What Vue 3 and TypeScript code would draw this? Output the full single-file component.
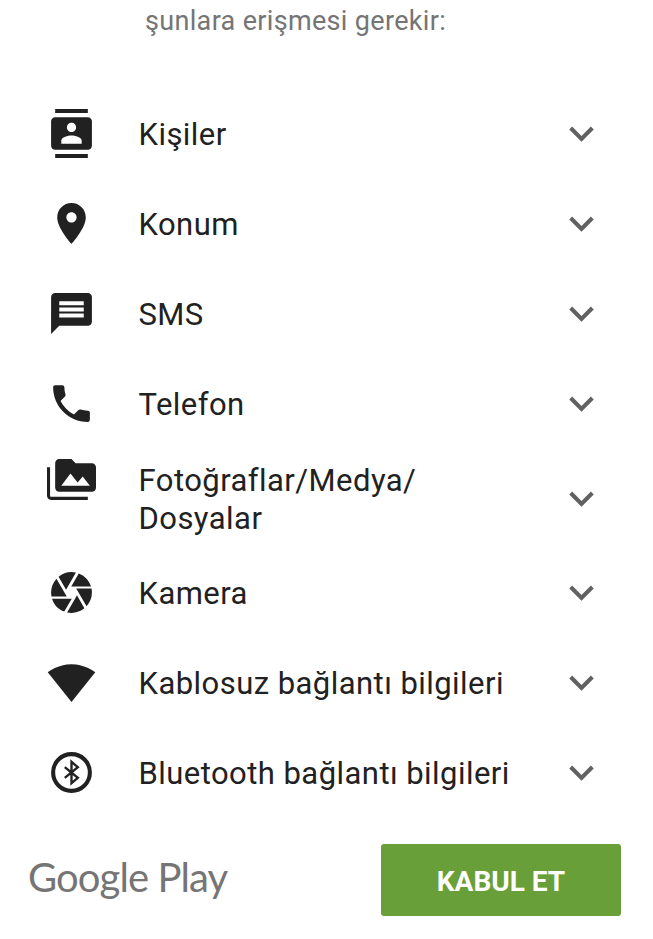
<template>
  <div class="screen">
    <p class="intro">şunlara erişmesi gerekir:</p>

    <ul class="perms">
      <li
        v-for="perm in permissions"
        :key="perm.label"
        class="perm"
        :class="{ 'is-double': perm.double }"
      >
        <svg class="perm-icon" viewBox="0 0 24 24" aria-hidden="true">
          <template v-if="perm.path">
            <path :d="perm.path" />
          </template>
          <template v-else>
            <circle cx="12" cy="12" r="9" class="bt-ring" />
            <path d="M8.7 9.4l6.4 5.2-3.1 2.6V6.8l3.1 2.6-6.4 5.2" class="bt-rune" />
          </template>
        </svg>
        <span class="perm-label">{{ perm.label }}</span>
        <svg class="chevron" viewBox="0 0 24 24" aria-hidden="true">
          <path d="M16.59 8.59L12 13.17 7.41 8.59 6 10l6 6 6-6z" />
        </svg>
      </li>
    </ul>

    <footer class="footer">
      <span class="brand">Google Play</span>
      <button class="accept" type="button">KABUL ET</button>
    </footer>
  </div>
</template>

<script setup lang="ts">
interface Permission {
  label: string;
  path?: string;
  double?: boolean;
}

const permissions: Permission[] = [
  {
    label: "Kişiler",
    path: "M20 0H4v2h16V0zM4 24h16v-2H4v2zM20 4H4c-1.1 0-2 .9-2 2v12c0 1.1.9 2 2 2h16c1.1 0 2-.9 2-2V6c0-1.1-.9-2-2-2zm-8 2.75c1.24 0 2.25 1.01 2.25 2.25s-1.01 2.25-2.25 2.25S9.75 10.24 9.75 9 10.76 6.75 12 6.75zM17 17H7v-1.5c0-1.67 3.33-2.5 5-2.5s5 .83 5 2.5V17z",
  },
  {
    label: "Konum",
    path: "M12 2C8.13 2 5 5.13 5 9c0 5.25 7 13 7 13s7-7.75 7-13c0-3.87-3.13-7-7-7zm0 9.5c-1.38 0-2.5-1.12-2.5-2.5s1.12-2.5 2.5-2.5 2.5 1.12 2.5 2.5-1.12 2.5-2.5 2.5z",
  },
  {
    label: "SMS",
    path: "M20 2H4c-1.1 0-1.99.9-1.99 2L2 22l4-4h14c1.1 0 2-.9 2-2V4c0-1.1-.9-2-2-2zm-2 12H6v-2h12v2zm0-3H6V9h12v2zm0-3H6V6h12v2z",
  },
  {
    label: "Telefon",
    path: "M6.62 10.79c1.44 2.83 3.76 5.14 6.59 6.59l2.2-2.2c.27-.27.67-.36 1.02-.24 1.12.37 2.33.57 3.57.57.55 0 1 .45 1 1V20c0 .55-.45 1-1 1-9.39 0-17-7.61-17-17 0-.55.45-1 1-1h3.5c.55 0 1 .45 1 1 0 1.25.2 2.45.57 3.57.11.35.03.74-.25 1.02l-2.2 2.2z",
  },
  {
    label: "Fotoğraflar/Medya/ Dosyalar",
    double: true,
    path: "M1.5 6H0v14c0 1.1.9 2 2 2h18v-1.5H2c-.3 0-.5-.2-.5-.5V6zM22 4h-8l-2-2H6c-1.1 0-1.99.9-1.99 2L4 16c0 1.1.9 2 2 2h16c1.1 0 2-.9 2-2V6c0-1.1-.9-2-2-2zM7 15l4.5-6 3.5 4.51 2.5-3.01L21 15H7z",
  },
  {
    label: "Kamera",
    path: "M9.4 10.5l4.77-8.26C13.47 2.09 12.75 2 12 2c-2.4 0-4.6.85-6.32 2.25l3.66 6.35.06-.1zM21.54 9c-.92-2.92-3.15-5.26-6-6.34L11.88 9h9.66zm.26 1h-7.49l.29.5 4.76 8.25C21 16.97 22 14.61 22 12c0-.69-.07-1.35-.2-2zM8.54 12l-3.9-6.75C3.01 7.03 2 9.39 2 12c0 .69.07 1.35.2 2h7.49l-1.15-2zm-6.08 3c.92 2.92 3.15 5.26 6 6.34L12.12 15H2.46zm11.27 0l-3.9 6.76c.7.15 1.42.24 2.17.24 2.4 0 4.6-.85 6.32-2.25l-3.66-6.35-.93 1.6z",
  },
  {
    label: "Kablosuz bağlantı bilgileri",
    path: "M12.01 21.49L23.64 7c-.45-.34-4.93-4-11.64-4C5.28 3 .81 6.66.36 7l11.64 14.5.01-.01z",
  },
  { label: "Bluetooth bağlantı bilgileri" },
];
</script>

<style scoped>
.screen {
  width: 653px;
  height: 939px;
  overflow: hidden;
  background: #fff;
  font-family: Roboto, "Liberation Sans", sans-serif;
}

.intro {
  margin: 0;
  height: 89px;
  padding: 3px 0 0 145px;
  box-sizing: border-box;
  font-size: 27px;
  line-height: 36px;
  letter-spacing: 0.33px;
  color: #757575;
}

.perms {
  margin: 0;
  padding: 0;
  list-style: none;
}

.perm {
  display: flex;
  align-items: center;
  height: 90px;
  padding-left: 47px;
  padding-right: 47px;
}

.perm.is-double {
  height: 99px;
}

.perm-icon {
  flex: none;
  width: 49px;
  height: 49px;
  margin-bottom: 2px;
  fill: #212121;
}

.is-double .perm-icon {
  align-self: flex-start;
  margin-top: 6px;
}

.bt-ring {
  fill: none;
  stroke: #212121;
  stroke-width: 2;
}

.bt-rune {
  fill: none;
  stroke: #212121;
  stroke-width: 1.15;
}

.perm-label {
  flex: 1;
  margin-top: 2px;
  margin-left: 42.5px;
  font-size: 31px;
  line-height: 38px;
  letter-spacing: 0.45px;
  color: #212121;
}

.is-double .perm-label {
  padding-right: 120px;
}

.chevron {
  flex: none;
  width: 49px;
  height: 49px;
  margin-bottom: 2px;
  fill: #616161;
}

.is-double .chevron {
  margin-bottom: 0;
}

.footer {
  display: flex;
  align-items: center;
  justify-content: space-between;
  padding: 26px 32px 0 28px;
}

.brand {
  padding-bottom: 6px;
  font-family: Lato, "Open Sans", sans-serif;
  font-size: 40px;
  letter-spacing: -0.9px;
  color: #757575;
}

.accept {
  width: 240px;
  height: 72px;
  padding: 2px 0 0;
  border: none;
  border-radius: 3px;
  background: #689f38;
  color: #fff;
  font-family: Roboto, "Liberation Sans", sans-serif;
  font-size: 28px;
  font-weight: 700;
}
</style>
